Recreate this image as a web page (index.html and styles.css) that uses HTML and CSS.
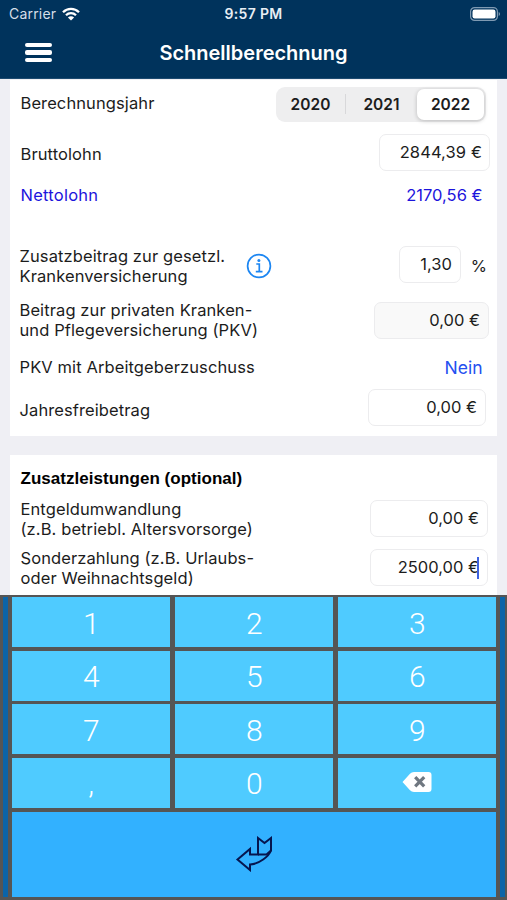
FILE: index.html
```
<!DOCTYPE html>
<html lang="de">
<head>
  <meta charset="UTF-8">
  <title>Schnellberechnung</title>
  <link rel="stylesheet" href="styles.css">
</head>
<body>
  <div class="screen">
    <header class="top">
      <div class="status">
        <div class="carrier">
          <span>Carrier</span>
          <svg class="wifi" width="18" height="14" viewBox="0 0 18 14" fill="none" stroke="#fff" stroke-width="2.3">
            <path d="M1 5.2C5.5 .7 12.500 .7 17 5.200"/>
            <path d="M4 8.300C6.800 5.500 11.200 5.500 14 8.300"/>
            <path d="M9 13.500L5.900 10.400C7.600 8.800 10.400 8.800 12.100 10.400Z" fill="#fff" stroke="none"/>
          </svg>
        </div>
        <span class="clock">9:57 PM</span>
        <svg class="battery" width="31" height="14" viewBox="0 0 31 14">
          <rect x=".6" y=".6" width="26.800" height="12.800" rx="4" fill="none" stroke="#7f9ab2" stroke-width="1.200"/>
          <rect x="2.500" y="2.500" width="23" height="9" rx="2.200" fill="#fff"/>
          <path d="M28.700 5v4c1.800-.6 1.800-3.400 0-4z" fill="#7f9ab2"/>
        </svg>
      </div>
      <div class="nav">
        <div class="menu"><i></i><i></i><i></i></div>
        <h1>Schnellberechnung</h1>
      </div>
    </header>

    <main>
      <section class="card">
        <div class="row year">
          <label>Berechnungsjahr</label>
          <div class="segments">
            <span>2020</span><span>2021</span><span class="active">2022</span>
          </div>
        </div>
        <div class="row gross">
          <label>Bruttolohn</label>
          <div class="field">2844,39 €</div>
        </div>
        <div class="row net">
          <label>Nettolohn</label>
          <span>2170,56 €</span>
        </div>
        <div class="row extra">
          <label>Zusatzbeitrag zur gesetzl.<br>Krankenversicherung</label>
          <svg class="info" width="26" height="26" viewBox="0 0 26 26" fill="none" stroke="#1c86f2" stroke-width="1.700">
            <circle cx="13" cy="13" r="11.400"/>
            <path d="M10.300 11h3v7.500M9.800 18.700h6.700"/>
            <circle cx="12.900" cy="7.400" r="1.500" fill="#1c86f2" stroke="none"/>
          </svg>
          <div class="field">1,30</div>
          <span class="percent">%</span>
        </div>
        <div class="row pkv">
          <label>Beitrag zur privaten Kranken-<br>und Pflegeversicherung (PKV)</label>
          <div class="field disabled">0,00 €</div>
        </div>
        <div class="row employer">
          <label>PKV mit Arbeitgeberzuschuss</label>
          <span class="link">Nein</span>
        </div>
        <div class="row allowance">
          <label>Jahresfreibetrag</label>
          <div class="field">0,00 €</div>
        </div>
      </section>

      <section class="card benefits">
        <h2>Zusatzleistungen (optional)</h2>
        <div class="row">
          <label>Entgeldumwandlung<br>(z.B. betriebl. Altersvorsorge)</label>
          <div class="field">0,00 €</div>
        </div>
        <div class="row">
          <label>Sonderzahlung (z.B. Urlaubs-<br>oder Weihnachtsgeld)</label>
          <div class="field focus">2500,00 €</div>
        </div>
      </section>
    </main>

    <div class="keypad">
      <div class="stripe"></div>
      <div class="keys">
        <div class="key">1</div><div class="key">2</div><div class="key">3</div>
        <div class="key">4</div><div class="key">5</div><div class="key">6</div>
        <div class="key">7</div><div class="key">8</div><div class="key">9</div>
        <div class="key">,</div><div class="key">0</div>
        <div class="key">
          <svg width="30" height="22" viewBox="0 0 30 22">
            <path d="M.5 11L8 2.800Q9.500 1 12 1H26.500Q29.500 1 29.500 4V18Q29.500 21 26.500 21H12Q9.500 21 8 19.200Z" fill="#fff"/>
            <path d="M13.200 6.200L22.200 15.400M22.200 6.200L13.200 15.400" stroke="#6f7780" stroke-width="3.200"/>
          </svg>
        </div>
        <div class="key enter">
          <svg width="38" height="36" viewBox="0 0 38 36" fill="none" stroke="#06164f" stroke-width="2">
            <path d="M2.500 23.500L15 13V18.500H23V2L29.500 7L36 2V14.500C34 20 24 28.500 15 28.500V34Z"/>
            <path d="M23 18.500H31.500L36 14.500"/>
          </svg>
        </div>
      </div>
      <div class="stripe"></div>
    </div>
  </div>
</body>
</html>
```
FILE: styles.css
```
* { box-sizing: border-box; }
body {margin: 0;font-family: Inter, "Liberation Sans", sans-serif;font-size: 16.5px;color: #1c1c1c;background: #efeff4;}
.screen {width: 507px;height: 900px;overflow: hidden;display: flex;flex-direction: column;}

.top {height: 79px;flex: none;background: #00335c;color: #fff;border-bottom: 1px solid #1c4a70;}
.status {display: grid;grid-template-columns: 1fr auto 1fr;align-items: center;height: 27px;padding: 0 6px 0 9px;font-size: 14px;}
.carrier {display: flex;align-items: center;gap: 6px;color: #d5dfe8;letter-spacing: .2px;}
.clock {margin-right: 3px;font-weight: 600;letter-spacing: .3px;color: #e8eef4;}
.battery {justify-self: end;}
.nav {display: grid;grid-template-columns: 27px 1fr 27px;align-items: center;height: 51px;padding: 0 25px;}
.menu {display: flex;flex-direction: column;gap: 3px;}
.menu i {height: 4.500px;border-radius: 2px;background: #fff;}
h1 {margin: 0;text-align: center;font-size: 20px;font-weight: 600;}

main {height: 516px;flex: none;overflow: hidden;padding: 1px 10px 0;}
.card {background: #fff;padding: 0 11px 0 10.500px;}
.row {display: flex;align-items: center;justify-content: space-between;white-space: nowrap;}
label {line-height: 20.500px;letter-spacing: .1px;}
.field {flex: none;height: 37px;line-height: 35px;padding: 0 8px;text-align: right;border: 1px solid #ececee;border-radius: 7px;background: #fff;}
.disabled {background: #f9f9f9;}

.segments {display: flex;width: 210px;height: 35px;padding: 2px;border-radius: 9px;background: #eeeeef;font-weight: 600;font-size: 15.500px;}
.segments span {width: 71px;line-height: 31px;text-align: center;}
.segments span:first-child {width: 68px;padding-right: 3px;background: linear-gradient(#d8d8da, #d8d8da) right center / 1px 20px no-repeat;}
.segments .active {width: 67px;border-radius: 7px;background: #fff;box-shadow: 0 1px 4px rgba(0, 0, 0, .22);}

.year {height: 48px;}
.year label {margin-top: -2px;}
.gross {height: 48px;margin-right: -4px;}
.gross label {padding-top: 4px;}
.gross .field {width: 111px;padding-right: 7px;letter-spacing: .1px;}
.net {height: 38px;margin-right: 3.500px;color: #1c14dc;}
.net label {letter-spacing: .25px;}
.extra {height: 48px;margin: 26px -1px 0 -1px;}
.extra label {padding-top: 4px;}
.info {margin: 4px auto 0 21px;}
.extra .field {width: 62px;margin-right: 10px;}
.percent {padding-top: 4px;}
.pkv {height: 48px;margin: 8px -3px 0 -1px;}
.pkv .field {width: 115px;}
.employer {height: 36px;margin: 5px 3.500px 0 -1px;}
.link {color: #2450f0;font-size: 17.500px;}
.allowance {height: 47px;margin: 1px 0 0 -1px;padding-bottom: 4px;}
.allowance label {padding-top: 5px;}
.allowance .field {width: 118px;}
.card:first-child {height: 356px;}

.benefits {height: 160px;margin-top: 19px;padding: 11px 9px 0 10.500px;}
h2 {margin: 0 0 10px;font-family: "Liberation Sans", sans-serif;font-size: 17px;line-height: 25px;height: 24px;letter-spacing: .03px;color: #000;}
.benefits .row {height: 37px;margin-bottom: 12px;}
.benefits .field {width: 118px;}
.benefits label {margin-top: 1px;}
.focus {position: relative;}
.focus::after {content: "";position: absolute;right: 8px;top: 7px;width: 2.500px;height: 22px;background: #3d62e0;}

.keypad {display: flex;flex: 1;justify-content: space-between;padding: 2px 2.500px 3px 3px;background: #555;}
.stripe {width: 4.500px;background: #0b64a8;}
.keys {display: grid;width: 484px;margin-left: 1px;grid-template-columns: repeat(3, 1fr);grid-template-rows: 50px 50px 50px 50px 1fr;gap: 3.500px 5px;}
.key {display: flex;align-items: center;justify-content: center;background: #4fcbff;color: #fff;font-family: Roboto, sans-serif;font-weight: 300;font-size: 30px;padding-top: 2px;}
.key svg {margin-top: -3px;}
.enter {grid-column: 1 / -1;margin-top: 1px;background: #32b1ff;}
```
